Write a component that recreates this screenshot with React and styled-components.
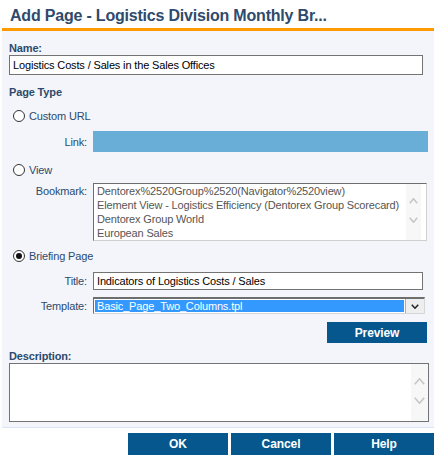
import styled, { createGlobalStyle } from 'styled-components';

const GlobalStyle = createGlobalStyle`
  body {
    margin: 0;
    background: #fff;
    font-family: "Liberation Sans", Arial, sans-serif;
    font-size: 11px;
    letter-spacing: -0.15px;
  }
`;

const bookmarks = [
  'Dentorex%2520Group%2520(Navigator%2520view)',
  'Element View - Logistics Efficiency (Dentorex Group Scorecard)',
  'Dentorex Group World',
  'European Sales',
];

const Dialog = styled.div`
  width: 436px;
  height: 466px;
`;

const Header = styled.div`
  margin: 0 2px;
  height: 24px;
  padding: 4px 0 0 8px;
  border-bottom: 3px solid #ff9a00;
  font-size: 16px;
  line-height: 24px;
  font-weight: bold;
  letter-spacing: -0.2px;
  color: #2f4a6b;
  white-space: nowrap;
`;

const Panel = styled.div`
  margin: 0 2px;
  padding: 10px 6px 5px 7px;
  background: #f4f5fa;
  border-bottom: 1px solid #dae4f2;
`;

const SectionLabel = styled.div`
  font-weight: bold;
  color: #2c4a6c;
  line-height: ${({ $lh }) => $lh || 14}px;
  margin-top: ${({ $mt }) => $mt || 0}px;
`;

const TextInput = styled.input`
  display: block;
  box-sizing: border-box;
  width: ${({ $w }) => $w}px;
  height: ${({ $h }) => $h}px;
  margin: 0;
  padding: 0 3px;
  border: 1px solid #737373;
  background: #fff;
  font: inherit;
  letter-spacing: inherit;
  color: #000;
  outline: none;
`;

const RadioRow = styled.label`
  display: flex;
  align-items: center;
  gap: 4px;
  height: 16px;
  margin-top: ${({ $mt }) => $mt}px;
  padding-left: 4px;
  color: #2c4a6c;
`;

const RadioCircle = styled.span`
  position: relative;
  box-sizing: border-box;
  width: 12px;
  height: 12px;
  border: 1px solid #333;
  border-radius: 50%;
  background: #fff;

  &::after {
    content: '';
    display: ${({ $checked }) => ($checked ? 'block' : 'none')};
    position: absolute;
    left: 2px;
    top: 2px;
    width: 6px;
    height: 6px;
    border-radius: 50%;
    background: #111;
  }
`;

const FieldRow = styled.div`
  display: grid;
  grid-template-columns: 78px auto;
  column-gap: 6px;
  align-items: ${({ $top }) => ($top ? 'start' : 'center')};
  margin-top: ${({ $mt }) => $mt}px;
`;

const FieldLabel = styled.div`
  text-align: right;
  color: #2c4a6c;
  line-height: 14px;
  padding-top: ${({ $top }) => ($top ? 1 : 0)}px;
`;

const LinkBox = styled.div`
  width: 335px;
  height: 21px;
  background: #68aed6;
`;

const ListBox = styled.div`
  display: flex;
  box-sizing: border-box;
  width: 334px;
  height: 58px;
  border: 1px solid #cfcfcf;
  border-top-color: #6e6e6e;
  border-left-color: #6e6e6e;
  background: #fff;
`;

const ListItems = styled.div`
  flex: 1;
  padding-left: 3px;
  color: #555;
  line-height: 14px;
  white-space: nowrap;
  overflow: hidden;
`;

const ScrollStrip = styled.div`
  display: flex;
  flex-direction: column;
  align-items: center;
  width: ${({ $w }) => $w}px;
  padding-top: ${({ $pt }) => $pt}px;
  gap: ${({ $gap }) => $gap}px;
  margin-right: ${({ $mr }) => $mr || 0}px;
  background: #f7f7f7;
`;

const Select = styled.div`
  display: flex;
  box-sizing: border-box;
  width: 332px;
  height: 17px;
  border: 1px solid #d6d6d6;
  border-top: 2px solid #6e6e6e;
  border-left-color: #6e6e6e;
  background: #fff;
`;

const SelectValue = styled.div`
  flex: 1;
  margin: 1px 1px 1px 1px;
  padding-left: 2px;
  background: #3399ff;
  color: #fff;
  line-height: 12px;
  white-space: nowrap;
`;

const SelectButton = styled.div`
  display: flex;
  align-items: center;
  justify-content: center;
  box-sizing: border-box;
  width: 19px;
  border-left: 1px solid #adadad;
  background: #eeeeee;
`;

const ButtonRow = styled.div`
  display: flex;
  justify-content: flex-end;
  gap: 3px;
  margin-top: ${({ $mt }) => $mt || 0}px;
  margin-right: ${({ $mr }) => $mr || 0}px;
`;

const Button = styled.button`
  width: 100px;
  height: ${({ $h }) => $h || 22}px;
  margin: 0;
  padding: 0;
  border: none;
  background: #05578e;
  color: #fff;
  font-family: inherit;
  font-size: 12px;
  font-weight: bold;
  letter-spacing: -0.1px;
`;

const TextArea = styled.div`
  display: flex;
  justify-content: flex-end;
  box-sizing: border-box;
  width: 420px;
  height: 59px;
  border: 1px solid #737373;
  background: #fff;
`;

const Footer = styled.div`
  margin: 5px 2px 0;
`;

const Chevron = ({ up, w = 9, h = 6, color = '#c6c6c6', sw = 1.6 }) => (
  <svg width={w} height={h} viewBox={`0 0 ${w} ${h}`} fill="none">
    <polyline
      points={
        up
          ? `0.8,${h - 0.8} ${w / 2},0.8 ${w - 0.8},${h - 0.8}`
          : `0.8,0.8 ${w / 2},${h - 0.8} ${w - 0.8},0.8`
      }
      stroke={color}
      strokeWidth={sw}
    />
  </svg>
);

const Radio = ({ checked, label, mt }) => (
  <RadioRow $mt={mt}>
    <RadioCircle $checked={checked} />
    {label}
  </RadioRow>
);

export default function App() {
  return (
    <Dialog>
      <GlobalStyle />
      <Header>Add Page - Logistics Division Monthly Br...</Header>
      <Panel>
        <SectionLabel>Name:</SectionLabel>
        <TextInput $w={414} $h={20} readOnly value="Logistics Costs / Sales in the Sales Offices" />

        <SectionLabel $mt={10}>Page Type</SectionLabel>

        <Radio label="Custom URL" mt={9} />
        <FieldRow $mt={7}>
          <FieldLabel>Link:</FieldLabel>
          <LinkBox />
        </FieldRow>

        <Radio label="View" mt={10} />
        <FieldRow $mt={5} $top>
          <FieldLabel $top>Bookmark:</FieldLabel>
          <ListBox>
            <ListItems>
              {bookmarks.map((b) => (
                <div key={b}>{b}</div>
              ))}
            </ListItems>
            <ScrollStrip $w={15} $pt={14} $gap={13} $mr={5}>
              <Chevron up />
              <Chevron />
            </ScrollStrip>
          </ListBox>
        </FieldRow>

        <Radio label="Briefing Page" checked mt={7} />
        <FieldRow $mt={8}>
          <FieldLabel>Title:</FieldLabel>
          <TextInput $w={330} $h={18} readOnly value="Indicators of Logistics Costs / Sales" />
        </FieldRow>
        <FieldRow $mt={7}>
          <FieldLabel>Template:</FieldLabel>
          <Select>
            <SelectValue>Basic_Page_Two_Columns.tpl</SelectValue>
            <SelectButton>
              <Chevron w={8} h={5} color="#222" sw={1.5} />
            </SelectButton>
          </Select>
        </FieldRow>
        <ButtonRow $mt={8} $mr={1}>
          <Button $h={21}>Preview</Button>
        </ButtonRow>

        <SectionLabel $mt={7} $lh={13}>Description:</SectionLabel>
        <TextArea>
          <ScrollStrip $w={17} $pt={14} $gap={12}>
            <Chevron up w={11} h={7} />
            <Chevron w={11} h={7} />
          </ScrollStrip>
        </TextArea>
      </Panel>
      <Footer>
        <ButtonRow>
          <Button>OK</Button>
          <Button>Cancel</Button>
          <Button>Help</Button>
        </ButtonRow>
      </Footer>
    </Dialog>
  );
}
